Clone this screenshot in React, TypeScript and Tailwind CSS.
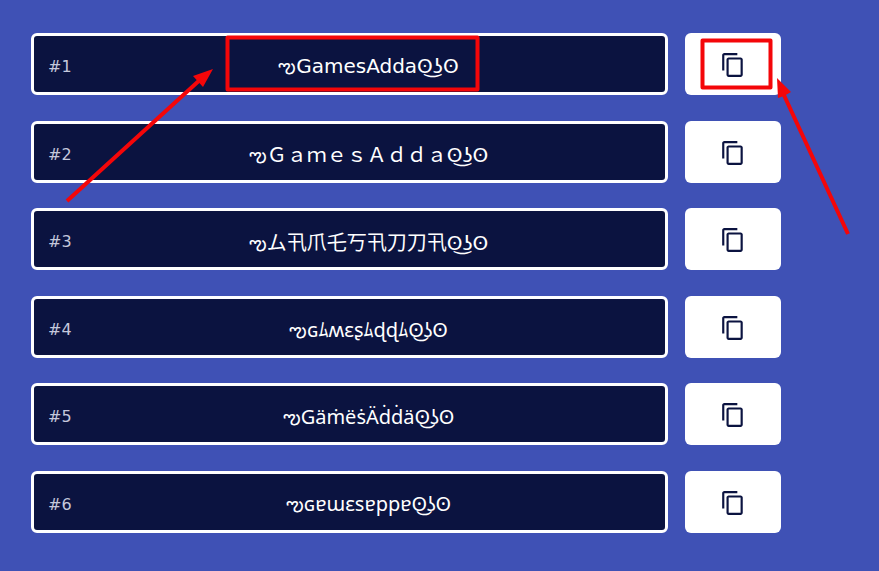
import React from 'react';
import clsx from 'clsx';

interface FontStyleItem {
  id: number;
  text: string;
  wide?: boolean;
}

const items: FontStyleItem[] = [
  { id: 1, text: 'ఌGamesAddaʘ͜ʖʘ', wide: true },
  { id: 2, text: 'ఌＧａｍｅｓＡｄｄａʘ͜ʖʘ', wide: true },
  { id: 3, text: 'ఌム卂爪乇丂卂刀刀卂ʘ͜ʖʘ', wide: true },
  { id: 4, text: 'ఌɢﾑʍɛʂﾑɖɖﾑʘ͜ʖʘ' },
  { id: 5, text: 'ఌGäṁëṡÄḋḋäʘ͜ʖʘ' },
  { id: 6, text: 'ఌɢɐɯɛsɐppɐʘ͜ʖʘ' },
];

function CopyIcon() {
  return (
    <svg viewBox="0 0 24 24" className="h-[26px] w-[26px]" fill="currentColor" aria-hidden="true">
      <path d="M16 1H4c-1.1 0-2 .9-2 2v14h2V3h12V1zm3 4H8c-1.1 0-2 .9-2 2v14c0 1.1.9 2 2 2h11c1.1 0 2-.9 2-2V7c0-1.1-.9-2-2-2zm0 16H8V7h11v14z" />
    </svg>
  );
}

function StyleRow({ item }: { item: FontStyleItem }) {
  return (
    <li className="flex gap-[17px]">
      <div className="relative h-[62px] flex-1">
        <label
          htmlFor={`style-${item.id}`}
          className="absolute inset-y-0 left-[17px] flex items-center pt-1.5 font-['DejaVu_Sans',sans-serif] text-base text-[#c5c8dc]"
        >
          #{item.id}
        </label>
        <input
          id={`style-${item.id}`}
          readOnly
          value={item.text}
          className={clsx(
            'h-full w-full rounded-md border-3 border-white bg-[#0b1340] pt-2 pl-[38px] text-center text-xl text-white outline-none',
            item.wide
              ? "font-['DejaVu_Sans','Noto_Sans_CJK_JP',sans-serif]"
              : "font-['Noto_Sans','DejaVu_Sans','Noto_Sans_CJK_JP',sans-serif]"
          )}
        />
      </div>
      <button
        type="button"
        aria-label={`Copy style ${item.id}`}
        className="flex w-24 items-center justify-center rounded-md bg-white pt-0.5 text-[#0b1340]"
      >
        <CopyIcon />
      </button>
    </li>
  );
}

// Red marks that point at the first text and its copy button
function Annotations() {
  return (
    <svg
      width="879"
      height="571"
      viewBox="0 0 879 571"
      className="pointer-events-none absolute top-0 left-0"
      fill="none"
      stroke="#f40609"
      strokeWidth="4"
      aria-hidden="true"
    >
      <rect x="227.5" y="37.5" width="250" height="52" strokeLinejoin="round" />
      <rect x="702.5" y="40.5" width="68" height="47" strokeLinejoin="round" />
      <path d="M67 201L202 78M848 234L783 93" />
      <path d="M213 69L203 87L193 76ZM777 78L791 92L784 96L778 98Z" fill="#f40609" stroke="none" />
    </svg>
  );
}

export default function App() {
  return (
    <main className="relative flex min-h-screen flex-col bg-[#3f51b5] pt-[33px] pr-[98px] pb-[38px] pl-[31px]">
      <ul className="flex flex-1 flex-col justify-between gap-4">
        {items.map((item) => (
          <StyleRow key={item.id} item={item} />
        ))}
      </ul>
      <Annotations />
    </main>
  );
}
